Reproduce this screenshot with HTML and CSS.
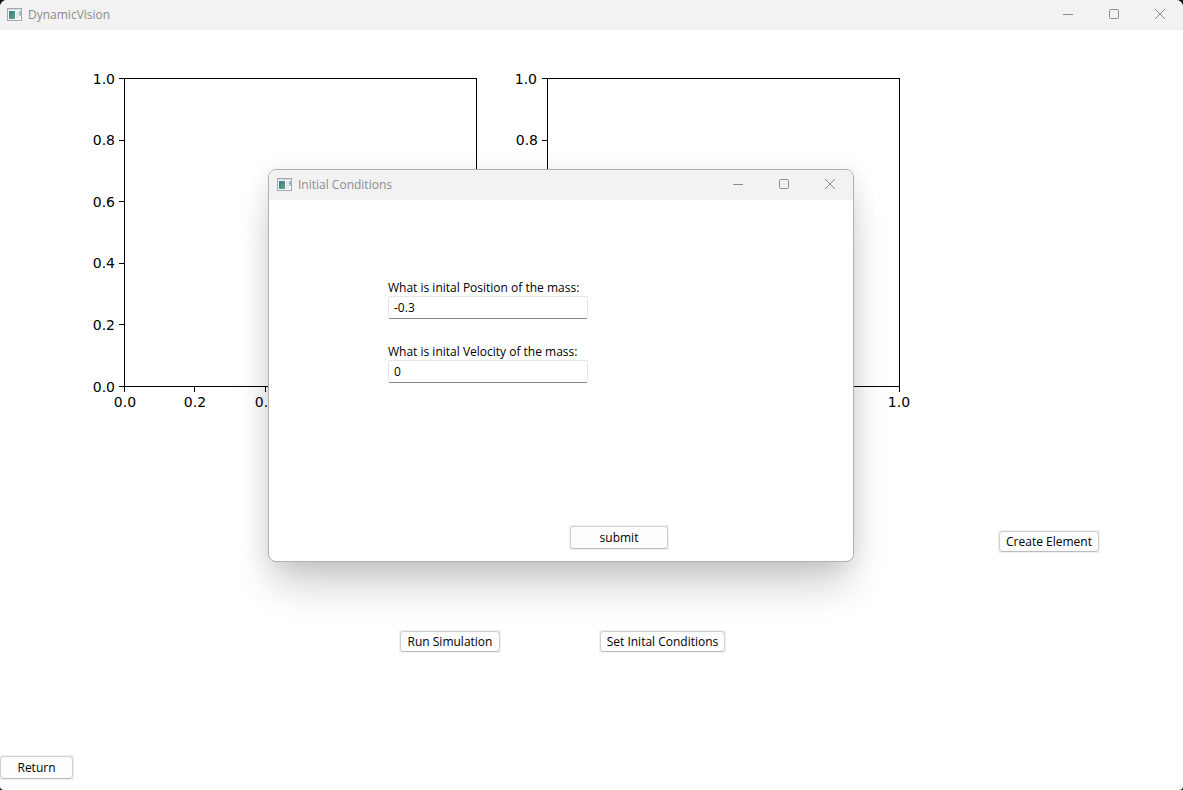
FILE: index.html
```html
<!DOCTYPE html>
<html lang="en">
<head>
<meta charset="utf-8">
<title>DynamicVision</title>
<link rel="stylesheet" href="styles.css">
</head>
<body>
<svg class="defs" aria-hidden="true">
  <defs>
    <linearGradient id="teal" x1="0" y1="0" x2="1" y2="1">
      <stop offset="0" stop-color="#3f7796"/><stop offset="1" stop-color="#5aa67c"/>
    </linearGradient>
    <symbol id="app" viewBox="0 0 15 13">
      <rect x=".5" y=".5" width="14" height="12" fill="#f8f9fa" stroke="#a3a8b0"/>
      <path d="M1 1.5h13" stroke="#d5dae2"/>
      <rect x="2" y="3" width="6" height="8" fill="url(#teal)"/>
      <rect x="9" y="3" width="3" height="8" fill="#e6e9ec"/>
      <path d="M13 3v3" stroke="#4d86b8"/><path d="M13 5v3" stroke="#67b089"/>
    </symbol>
    <symbol id="min" viewBox="0 0 12 12"><path d="M1 6.500h10" stroke="#8c8c8c"/></symbol>
    <symbol id="max" viewBox="0 0 12 12"><rect x="1.500" y="1.500" width="9" height="9" rx="1" fill="none" stroke="#8c8c8c"/></symbol>
    <symbol id="close" viewBox="0 0 12 12"><path d="M1 1l10 10M11 1L1 11" stroke="#8c8c8c"/></symbol>
  </defs>
</svg>
<div class="window">
  <header class="titlebar">
    <svg class="app-icon"><use href="#app"/></svg>
    <span class="title">DynamicVision</span>
    <button class="caption" aria-label="Minimize"><svg><use href="#min"/></svg></button>
    <button class="caption" aria-label="Maximize"><svg><use href="#max"/></svg></button>
    <button class="caption" aria-label="Close"><svg><use href="#close"/></svg></button>
  </header>
  <main class="content">
    <svg class="figure" width="920" height="400" viewBox="0 0 920 400" role="img" aria-label="Two empty plots">
      <g class="axes">
        <rect x="124.500" y="48.500" width="352" height="308"/>
        <path d="M119 48.500h5M119 110.500h5M119 171.500h5M119 233.500h5M119 294.500h5M119 356.500h5"/>
        <path d="M124.500 357v5M194.500 357v5M265.500 357v5M335.500 357v5M406.500 357v5M476.500 357v5"/>
        <rect x="547.500" y="48.500" width="352" height="308"/>
        <path d="M542 48.500h5M542 110.500h5M542 171.500h5M542 233.500h5M542 294.500h5M542 356.500h5"/>
        <path d="M547.500 357v5M617.500 357v5M688.500 357v5M758.500 357v5M829.500 357v5M899.500 357v5"/>
      </g>
      <g class="ticks-y">
        <text x="115" y="54">1.0</text><text x="115" y="115">0.8</text><text x="115" y="177">0.6</text><text x="115" y="238">0.4</text><text x="115" y="300">0.2</text><text x="115" y="362">0.0</text>
        <text x="537" y="54">1.0</text><text x="538" y="115">0.8</text>
      </g>
      <g class="ticks-x">
        <text x="125" y="377">0.0</text><text x="195" y="377">0.2</text><text x="266" y="377">0.4</text><text x="899" y="377">1.0</text>
      </g>
    </svg>
    <div class="row create"><button class="btn medium"><span>Create Element</span></button></div>
    <div class="row actions"><button class="btn medium"><span>Run Simulation</span></button><button class="btn wide"><span>Set Inital Conditions</span></button></div>
    <div class="row back"><button class="btn large return"><span>Return</span></button></div>
  </main>
</div>
<section class="dialog" role="dialog" aria-labelledby="dialog-title">
  <header class="titlebar">
    <svg class="app-icon"><use href="#app"/></svg>
    <span class="title" id="dialog-title">Initial Conditions</span>
    <button class="caption" aria-label="Minimize"><svg><use href="#min"/></svg></button>
    <button class="caption" aria-label="Maximize"><svg><use href="#max"/></svg></button>
    <button class="caption" aria-label="Close"><svg><use href="#close"/></svg></button>
  </header>
  <form class="form">
    <div class="field"><label for="position">What is inital Position of the mass:</label><input id="position" type="text" value="-0.3"></div>
    <div class="field"><label for="velocity">What is inital Velocity of the mass:</label><input id="velocity" type="text" value="0"></div>
    <button class="btn large submit" type="button"><span>submit</span></button>
  </form>
</section>
</body>
</html>
```
FILE: styles.css
```css
* { box-sizing: border-box; }
body {
  margin: 0;
  background: #10101c;
  color: #000;
  font: 12px/16px "Open Sans", "Noto Sans", sans-serif;
}
.defs { position: absolute; width: 0; height: 0; }
.window {
  display: flex;
  flex-direction: column;
  min-height: 100vh;
  background: #fff;
  border-radius: 7px 7px 4px 4px;
  overflow: hidden;
}
.titlebar {
  display: flex;
  align-items: center;
  height: 30px;
  padding: 0 0 2px 7px;
  background: #f2f2f2;
  color: #8c8c8c;
}
.app-icon { width: 15px; height: 13px; margin-right: 6px; }
.title { flex: 1; padding-top: 2px; }
.caption {
  display: flex;
  align-items: center;
  justify-content: center;
  width: 46px;
  height: 28px;
  padding: 0;
  border: 0;
  background: none;
}
.caption svg { width: 12px; height: 12px; }
.content { flex: 1; display: flex; flex-direction: column; }
.figure { display: block; flex: none; }
.axes { fill: none; stroke: #000; stroke-width: 1; }
.ticks-x, .ticks-y { font: 14px "DejaVu Sans", sans-serif; }
.ticks-y { text-anchor: end; }
.ticks-x { text-anchor: middle; }
.row { display: flex; }
.create { justify-content: flex-end; padding: 100px 83px 0 0; }
.actions { gap: 98px; padding: 77px 0 0 399px; }
.back { margin-top: auto; padding-bottom: 10px; }
.btn {
  display: flex;
  height: 23px;
  padding: 1px;
  border: 0;
  background: #f0f0f0;
  color: #000;
  font: inherit;
}
.btn span {
  flex: 1;
  height: 100%;
  padding: 2px 0;
  border: 1px solid #d0d0d0;
  border-bottom-color: #bcbcbc;
  border-radius: 4px;
  background: #fdfdfd;
  line-height: 16px;
  white-space: nowrap;
}
.btn.medium { width: 102px; }
.btn.wide { width: 127px; }
.btn.large { height: 25px; }
.btn.large span { padding-top: 3px; }
.return { width: 74px; padding-left: 0; }
.dialog {
  position: absolute;
  left: 268px;
  top: 169px;
  width: 586px;
  background: #fff;
  border: 1px solid #b0b0b0;
  border-radius: 8px;
  box-shadow: 0 28px 40px -6px rgba(0, 0, 0, .2), 0 2px 24px rgba(0, 0, 0, .09);
}
.dialog .titlebar { padding-left: 8px; border-radius: 7px 7px 0 0; }
.form {
  display: flex;
  flex-direction: column;
  gap: 25px;
  padding: 80px 184px 11px 119px;
}
.field { display: flex; flex-direction: column; width: 200px; }
.field input {
  height: 23px;
  padding: 0 5px 1px;
  border: 1px solid #e6e6e6;
  border-bottom-color: #868686;
  border-radius: 2px;
  background: #fff;
  color: #000;
  font: inherit;
}
.submit { align-self: flex-end; width: 100px; margin-top: 117px; }
```
